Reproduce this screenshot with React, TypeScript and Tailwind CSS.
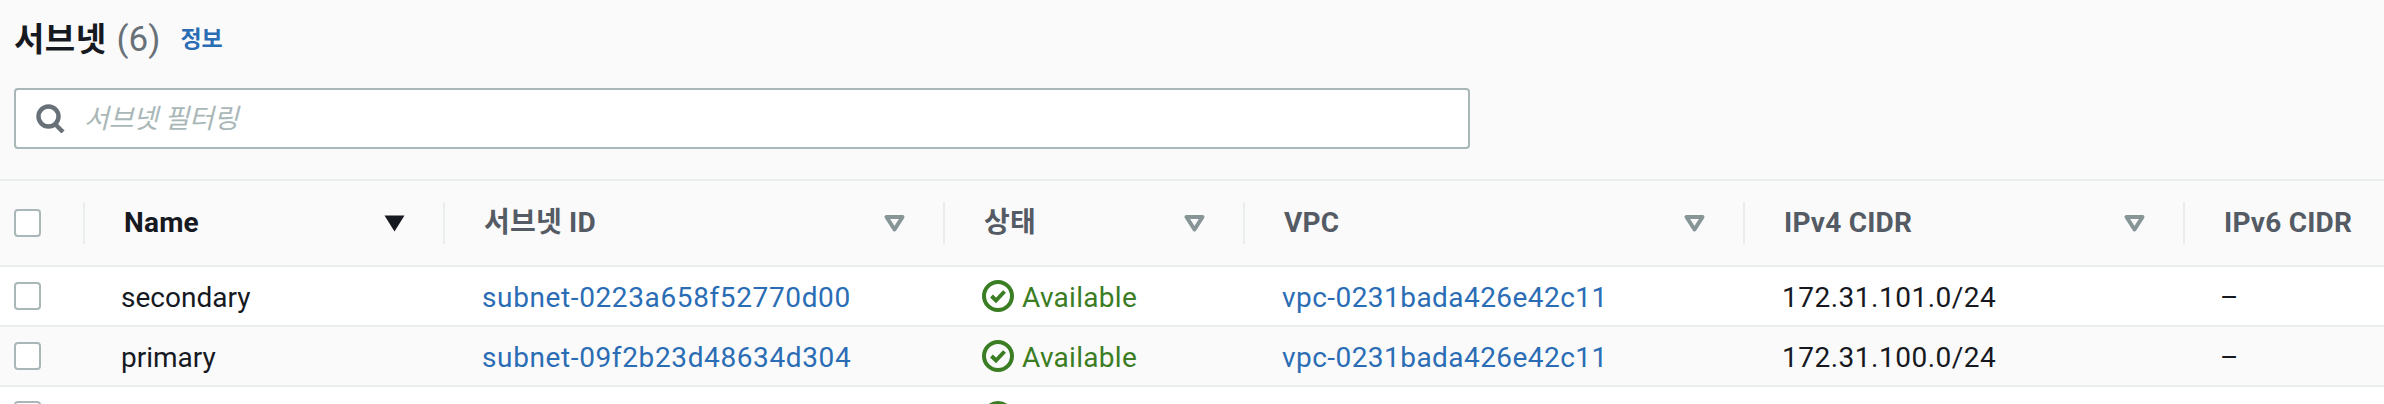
import React from 'react';

const rows = [
  { name: 'secondary', subnet: 'subnet-0223a658f52770d00', vpc: 'vpc-0231bada426e42c11', cidr: '172.31.101.0/24', rowBg: 'bg-white' },
  { name: 'primary', subnet: 'subnet-09f2b23d48634d304', vpc: 'vpc-0231bada426e42c11', cidr: '172.31.100.0/24', rowBg: 'bg-[#fafafa]' },
];

const gridCols = 'grid grid-cols-[83px_360px_500px_300px_500px_440px_1fr]';

const SortIcon = ({ active }: { active?: boolean }) => (
  <svg width="21" height="17" viewBox="0 0 21 17" className="shrink-0">
    {active ? (
      <path d="M0.5 0.5H20.5L10.5 16.5Z" fill="#16191f" />
    ) : (
      <path d="M2.5 2H18.5L10.5 14.5Z" fill="none" stroke="#879596" strokeWidth="4" strokeLinejoin="round" />
    )}
  </svg>
);

const Checkbox = () => <div className="w-[27px] h-[28px] bg-white border-2 border-[#aab7b8] rounded-[4px]" />;

const StatusIcon = () => (
  <svg width="32" height="32" viewBox="0 0 32 32" className="shrink-0">
    <circle cx="16" cy="16" r="14" fill="none" stroke="#3a7d23" strokeWidth="4" />
    <path d="M9.5 16L14 20.5L22.5 11.5" fill="none" stroke="#3a7d23" strokeWidth="4" />
  </svg>
);

const HeaderCell = ({ label, dark, active, noSort }: { label: string; dark?: boolean; active?: boolean; noSort?: boolean }) => (
  <div className="flex items-center">
    <div className="w-[2px] h-[42px] bg-[#eaeded] shrink-0" />
    <div className={`flex-1 flex items-center justify-between pl-[39px] pr-[38px] font-bold tracking-[0.2px] ${dark ? 'text-[#16191f]' : 'text-[#545b64]'}`}>
      <span className="whitespace-nowrap">{label}</span>
      {!noSort && <SortIcon active={active} />}
    </div>
  </div>
);

export default function App() {
  return (
    <div className="w-[2384px] h-[404px] overflow-hidden bg-[#fafafa] text-[28px] text-[#16191f] font-['Roboto','Noto_Sans_CJK_KR',sans-serif]">
      <div className="px-[14px]">
        <div className="h-[72px] pt-[8px] flex items-center">
          <h1 className="text-[33px] font-bold tracking-[0.5px]">서브넷</h1>
          <span className="ml-[10px] text-[35px] text-[#687078]">(6)</span>
          <a className="ml-[20px] text-[23px] font-bold text-[#2a6db5]">정보</a>
        </div>
        <div className="mt-[16px] w-[1456px] h-[61px] bg-white border-2 border-[#aab7b8] rounded-[4px] flex items-center pl-[20px]">
          <svg width="29" height="29" viewBox="0 0 29 29" className="shrink-0">
            <circle cx="12.5" cy="12.5" r="10" fill="none" stroke="#687078" strokeWidth="4.4" />
            <path d="M19 20L27 28" fill="none" stroke="#687078" strokeWidth="4.4" />
          </svg>
          <span className="ml-[19px] mt-[2px] italic text-[27px] tracking-[-0.2px] text-[#aab7b8]">서브넷 필터링</span>
        </div>
      </div>

      <div className="mt-[30px]">
        <div className={`${gridCols} h-[88px] border-y-2 border-[#eaeded] items-center`}>
          <div className="pl-[14px]"><Checkbox /></div>
          <HeaderCell label="Name" dark active />
          <HeaderCell label="서브넷 ID" />
          <HeaderCell label="상태" />
          <HeaderCell label="VPC" />
          <HeaderCell label="IPv4 CIDR" />
          <HeaderCell label="IPv6 CIDR" noSort />
        </div>
        {rows.map((r) => (
          <div key={r.name} className={`${gridCols} h-[60px] border-b-2 border-[#eaeded] items-center ${r.rowBg}`}>
            <div className="pl-[14px]"><Checkbox /></div>
            <div className="pl-[38px] pt-[3px]">{r.name}</div>
            <div className="pl-[39px] pt-[3px] tracking-[0.62px] text-[#2a6db5]">{r.subnet}</div>
            <div className="pl-[39px] flex items-center gap-[8px] text-[#3a7d23]">
              <StatusIcon />
              <span className="pt-[3px] tracking-[0.3px]">Available</span>
            </div>
            <div className="pl-[39px] pt-[3px] tracking-[0.45px] text-[#2a6db5]">{r.vpc}</div>
            <div className="pl-[39px] pt-[3px] tracking-[0.5px]">{r.cidr}</div>
            <div className="pl-[37px] pt-[3px]">–</div>
          </div>
        ))}
        <div className={`${gridCols} h-[60px] bg-white pt-[14px]`}>
          <div className="pl-[14px]"><Checkbox /></div>
          <div />
          <div />
          <div className="pl-[39px]"><StatusIcon /></div>
        </div>
      </div>
    </div>
  );
}
